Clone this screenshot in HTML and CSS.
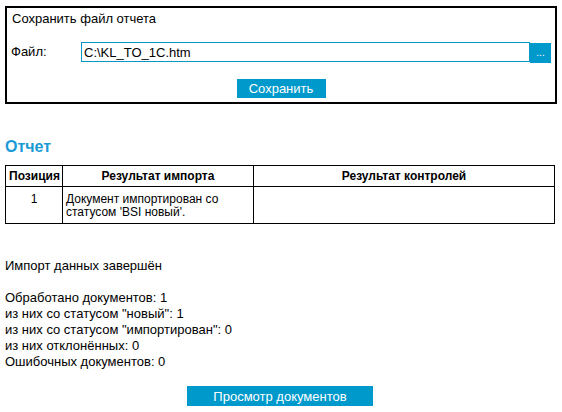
FILE: index.html
```html
<!DOCTYPE html>
<html lang="ru">
<head>
<meta charset="utf-8">
<title>Отчет</title>
<link rel="stylesheet" href="styles.css">
</head>
<body>
<div class="save-box">
  <div class="save-title">Сохранить файл отчета</div>
  <div class="file-row">
    <label class="file-label" for="file">Файл:</label>
    <input class="file-input" id="file" type="text" value="C:\KL_TO_1C.htm">
    <button class="browse-btn" type="button">...</button>
  </div>
  <div class="btn-row">
    <button class="btn save-btn" type="button">Сохранить</button>
  </div>
</div>

<h2 class="report-title">Отчет</h2>

<table class="report-table">
  <thead>
    <tr>
      <th class="col-pos">Позиция</th>
      <th class="col-imp">Результат импорта</th>
      <th class="col-ctl">Результат контролей</th>
    </tr>
  </thead>
  <tbody>
    <tr>
      <td class="cell-pos">1</td>
      <td>Документ импортирован со статусом 'BSI новый'.</td>
      <td></td>
    </tr>
  </tbody>
</table>

<div class="summary">
  Импорт данных завершён<br><br>
  Обработано документов: 1<br>
  из них со статусом "новый": 1<br>
  из них со статусом "импортирован": 0<br>
  из них отклонённых: 0<br>
  Ошибочных документов: 0
</div>

<div class="btn-row bottom-row">
  <button class="btn view-btn" type="button">Просмотр документов</button>
</div>
</body>
</html>
```

FILE: styles.css
```css
html, body {
  margin: 0;
  padding: 0;
  background: #fff;
}
body {
  font-family: "Liberation Sans", Arial, sans-serif;
  font-size: 13px;
  color: #000;
  width: 562px;
}
.save-box {
  margin: 6px 5px 0 5px;
  width: 548px;
  border: 2px solid #000;
  padding: 3px 0 4px 0;
}
.save-title {
  line-height: 16px;
  padding-left: 5px;
}
.file-row {
  display: flex;
  align-items: flex-start;
  margin-top: 15px;
  padding-left: 4px;
}
.file-label {
  width: 70px;
  line-height: 20px;
}
.file-input {
  box-sizing: border-box;
  width: 449px;
  height: 20px;
  margin: 0;
  border: 1px solid #0a96c8;
  padding: 0 2px;
  font-family: "Liberation Sans", Arial, sans-serif;
  font-size: 13px;
  color: #000;
  outline: none;
}
.browse-btn {
  box-sizing: border-box;
  width: 21px;
  height: 20px;
  margin: 1px 0 0 0;
  border: 0;
  padding: 0;
  background: #0099cc;
  color: #fff;
  font-family: "Liberation Sans", Arial, sans-serif;
  font-size: 10px;
  line-height: 20px;
}
.btn-row {
  display: flex;
  justify-content: center;
  margin-top: 16px;
}
.btn {
  border: 0;
  padding: 0;
  margin: 0;
  background: #0099cc;
  color: #fff;
  font-family: "Liberation Sans", Arial, sans-serif;
  font-size: 13px;
}
.save-btn {
  width: 89px;
  height: 19px;
}
.report-title {
  margin: 33px 0 0 5px;
  font-size: 16px;
  line-height: 20px;
  font-weight: bold;
  color: #1a9ad6;
}
.report-table {
  margin: 8px 0 0 5px;
  width: 550px;
  border-collapse: collapse;
  font-size: 12px;
  table-layout: fixed;
}
.report-table th,
.report-table td {
  box-sizing: border-box;
  border: 1px solid #000;
  padding: 0 3px;
}
.report-table th {
  height: 21px;
  font-weight: bold;
  text-align: center;
}
.report-table td {
  height: 37px;
  vertical-align: top;
  padding-top: 6px;
  line-height: 13px;
}
.col-pos { width: 57px; }
.col-imp { width: 191px; }
.report-table .cell-pos {
  text-align: center;
}
.summary {
  margin: 34px 0 0 5px;
  line-height: 16px;
}
.bottom-row {
  margin-top: 16px;
  width: 560px;
}
.view-btn {
  width: 186px;
  height: 20px;
}
```
